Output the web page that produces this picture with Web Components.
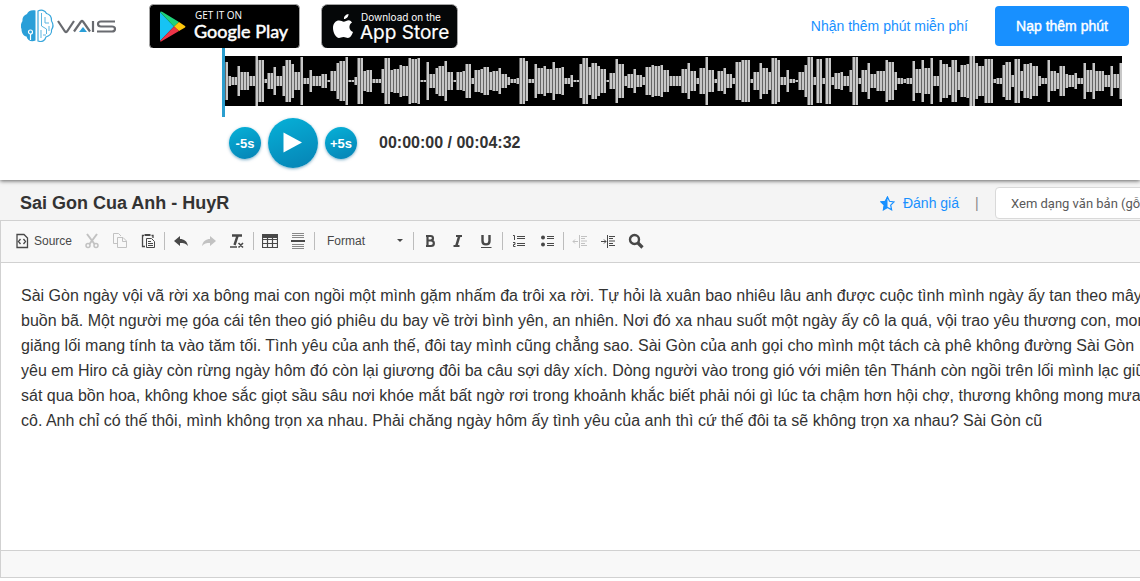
<!DOCTYPE html>
<html lang="vi">
<head>
<meta charset="utf-8">
<title>VAIS - Sai Gon Cua Anh</title>
<style>
html, body { margin: 0; }
body { font-family: "Liberation Sans", Arial, sans-serif; color: #333; background: #fff; overflow: hidden; }
</style>
</head>
<body>
<vais-app></vais-app>

<template id="t-app">
<style>
:host { display: block; }
</style>
<site-header></site-header>
<audio-player></audio-player>
<document-bar></document-bar>
<text-editor>
<p>Sài Gòn ngày vội vã rời xa bông mai con ngồi một mình gặm nhấm đa trôi xa rời. Tự hỏi là xuân bao nhiêu lâu anh được cuộc tình mình ngày ấy tan theo mây<br>buồn bã. Một người mẹ góa cái tên theo gió phiêu du bay về trời bình yên, an nhiên. Nơi đó xa nhau suốt một ngày ấy cô la quá, vội trao yêu thương con, mon<br>giăng lối mang tính ta vào tăm tối. Tình yêu của anh thế, đôi tay mình cũng chẳng sao. Sài Gòn của anh gọi cho mình một tách cà phê không đường Sài Gòn<br>yêu em Hiro cả giày còn rừng ngày hôm đó còn lại giương đôi ba câu sợi dây xích. Dòng người vào trong gió với miên tên Thánh còn ngồi trên lối mình lạc giữ<br>sát qua bồn hoa, không khoe sắc giọt sầu sâu nơi khóe mắt bất ngờ rơi trong khoảnh khắc biết phải nói gì lúc ta chậm hơn hội chợ, thương không mong mưa<br>cô. Anh chỉ có thế thôi, mình không trọn xa nhau. Phải chăng ngày hôm ấy tình yêu của anh thì cứ thế đôi ta sẽ không trọn xa nhau? Sài Gòn cũ</p>
</text-editor>
</template>

<template id="t-header">
<style>
:host { display: block; }
header { display: flex; height: 48px; align-items: center; padding: 4px 11px 0 21px; box-sizing: border-box; }
a { text-decoration: none; color: #1890ff; display: block; }
svg { display: block; }
.logo { margin-right: 33px; }
.badge { margin-right: 21px; }
.free { margin-left: auto; font-size: 14px; margin-right: 27px; }
button { font: 14px "Liberation Sans", Arial, sans-serif; -webkit-text-stroke: 0.4px #fff; color: #fff; background: #1890ff; border: 0; border-radius: 4px; height: 40px; width: 134px; padding: 0; }
</style>
<header>
<a class="logo" href="#" aria-label="VAIS">
<svg width="95" height="34" viewBox="0 0 95 34" fill="none">
<path d="M14.500 1.500C10 .5 7 2.500 6 5 3 6 1 9 1.500 12-.5 15-.5 18 .5 20c0 4 2 7 5 7.500 1 4 5 6 9 4z" fill="#2a9fd8"/>
<circle cx="9.500" cy="23" r="2" stroke="#fff" stroke-width="1.200"/><path d="M9.500 25v6" stroke="#fff" stroke-width="1.200"/>
<path d="M17 2v30c4 1.500 7-.5 8-4 4-1 6-4 5.500-7 2-3 2-6 0-9 .5-4-2-7-5-7.500C24 1 20 .5 17 2z" stroke="#3aa7dc" stroke-width="1.200"/>
<path d="M20.500 4v13l5 3v5M24 8v6h4M20 21v8M28 17v5M22 26h3" stroke="#5bb5e0"/>
<path d="M37 12l7 10.500q1 1 2 0L53 12M53 22.500l7-10q1-1 2 0l7 10M72 12v11M94 12.500H80q-3 0-3 2.500t3 2.500h11q3 0 3 2.500t-3 2.500H76" stroke="#696b70" stroke-width="2.200"/>
<path d="M58 23l4-5 4 5z" fill="#2a9fd8"/>
</svg></a>
<a class="badge" href="#" aria-label="Google Play"><svg width="151" height="45" viewBox="0 0 151 45">
<rect x=".5" y=".5" width="150" height="44" rx="4" fill="#000" stroke="#a6a6a6"/>
<path d="M11 8v29l14-14.500z" fill="#16c3f4"/><path d="M11 8q1-1 2.500 0L30 18l-5 4.500z" fill="#1fd27b"/><path d="M30 18l6 4q1 .7 0 1.400l-6 3.600-5-4.500z" fill="#fdc70c"/><path d="M11 37l14-14.500 5 4.500-17 10q-1.500 1-2 0z" fill="#ed3448"/>
<g fill="#fff" font-family="Lato, sans-serif"><text x="46" y="15" font-size="10" font-family="Open Sans">GET IT ON</text><text x="45" y="34" font-size="18" stroke="#fff" stroke-width=".5">Google Play</text></g>
</svg></a>
<a class="badge" href="#" aria-label="App Store"><svg width="137" height="45" viewBox="0 0 137 45">
<rect x=".5" y=".5" width="136" height="44" rx="6" fill="#050708" stroke="#a6a6a6"/>
<path d="M27.500 10c.2 2.500-2 5-4.500 5-.3-2.500 2-4.800 4.500-5zM31 18.500c-4 2.500-3 8 1 9.500-1 3-3 6-5 6-1.800 0-2.500-1-4.500-1s-3 1-4.500 1c-3 0-6-5.500-6-10 0-5 3-7.500 6-7.500 2 0 3.500 1.200 4.800 1.200S26 16.300 28 16.300q2 .2 3 2.200z" fill="#fff"/>
<g fill="#fff" font-family="Inter, sans-serif"><text x="40" y="17" font-size="10">Download on the</text><text x="39" y="35" font-size="19" stroke="#fff" stroke-width=".2">App Store</text></g>
</svg></a>
<a class="free" href="#">Nhận thêm phút miễn phí</a>
<button type="button">Nạp thêm phút</button>
</header>
</template>

<template id="t-wave">
<style>
:host { display: flex; height: 69px; align-items: flex-start; }
.cursor { flex: none; width: 3px; height: 69px; background: #2b9ecf; }
svg { flex: 1; min-width: 0; height: 50px; margin-top: 8px; background: #000; display: block; }
</style>
<div class="cursor"></div>
<svg viewBox="0 0 897 50" preserveAspectRatio="none" shape-rendering="crispEdges" aria-label="Waveform"><path id="edge" fill="#666"/><path id="bar" fill="#c8c8c8"/></svg>
</template>

<template id="t-player">
<style>
:host { display: block; position: relative; z-index: 1; background: #fff; box-shadow: 0 1px 4px rgba(0,0,0,.6); clip-path: inset(0 0 -8px 0); padding: 0 18px 12px 222px; }
.controls { display: flex; align-items: center; gap: 7px; padding: 1px 0 0 7px; }
button { border: 0; padding: 0; border-radius: 50%; width: 32px; height: 32px; color: #fff; background: linear-gradient(160deg, #06b1d8, #0682b4); box-shadow: 0 1px 3px rgba(0,100,150,.5); font: bold 13px "Liberation Sans", Arial, sans-serif; }
.play { width: 50px; height: 50px; }
.play svg { display: block; margin: 0 auto; }
time { font-weight: bold; font-size: 16px; margin-left: 15px; }
</style>
<wave-form></wave-form>
<div class="controls">
<button type="button">-5s</button>
<button type="button" class="play" aria-label="Play"><svg width="50" height="50"><path d="M15.500 14.500v20l18.500-10z" fill="#fff"/></svg></button>
<button type="button">+5s</button>
<time>00:00:00 / 00:04:32</time>
</div>
</template>

<template id="t-docbar">
<style>
:host { display: block; background: #f4f4f4; overflow: hidden; }
.bar { display: flex; align-items: center; height: 40px; padding: 6px 0 0 20px; box-sizing: border-box; }
h1 { font-size: 18px; line-height: 24px; margin: 0; }
a { margin-left: auto; display: flex; align-items: center; gap: 8px; font-size: 14px; color: #1890ff; text-decoration: none; }
.sep { font-size: 14px; color: #888; margin: 0 16px; width: 4px; }
.pick { flex: none; width: 145px; }
select { appearance: none; width: 190px; height: 32px; border: 1px solid #d9d9d9; border-radius: 4px; padding: 0 0 0 15px; background: #fff; color: #595959; font: 13px Roboto, sans-serif; display: block; }
</style>
<div class="bar">
<h1>Sai Gon Cua Anh - HuyR</h1>
<a href="#"><svg width="15" height="15" viewBox="0 0 15 15"><path d="M7.500 1l2 4.300 4.500.6-3.300 3.200.9 4.700-4.100-2.300-4.100 2.300.9-4.700L1 5.900l4.500-.6z" fill="none" stroke="#1890ff" stroke-width="1.200"/><path d="M7.500 0v11.500l-4.600 2.800 1-5L0 5.500l5-.7z" fill="#1890ff"/></svg>Đánh giá</a>
<span class="sep">|</span>
<div class="pick"><select aria-label="Chế độ xem"><option>Xem dạng văn bản (gỗ</option></select></div>
</div>
</template>

<template id="t-tool">
<style>
:host { display: block; flex: none; }
button { display: flex; align-items: center; gap: 4px; border: 0; background: none; padding: 0 6px; height: 28px; font: 12px "Liberation Sans", Arial, sans-serif; color: #484848; }
svg { display: block; width: 16px; height: 16px; }
:host([off]) svg { opacity: .3; }
</style>
<button type="button"><svg viewBox="0 0 16 16" fill="none" stroke="#484848"></svg><slot></slot></button>
</template>

<template id="t-editor">
<style>
:host { display: block; border: 1px solid #d1d1d1; border-right: 0; background: #fff; overflow: hidden; }
.tools { display: flex; align-items: center; height: 42px; box-sizing: border-box; background: #f8f8f8; border-bottom: 1px solid #d1d1d1; padding: 0 0 2px 7px; }
i { flex: none; width: 1px; height: 18px; background: #bcbcbc; margin: 0 2px; }
.combo { display: flex; align-items: center; margin: 0 1px 0 3px; width: 90px; justify-content: space-between; border: 0; background: none; padding: 0 7px; font: 12px "Liberation Sans", Arial, sans-serif; color: #484848; }
.combo b { border: 3px solid transparent; border-top-color: #484848; border-bottom: 0; }
.body { min-height: 287px; box-sizing: border-box; padding: 20px 20px 0; font-size: 16px; line-height: 25px; white-space: nowrap; }
::slotted(p) { margin: 0; }
.status { height: 26px; background: #f8f8f8; border-top: 1px solid #d1d1d1; }
</style>
<div class="tools" role="toolbar">
<tool-button icon="source">Source</tool-button>
<tool-button icon="cut" off></tool-button><tool-button icon="copy" off></tool-button><tool-button icon="paste"></tool-button><i></i>
<tool-button icon="undo"></tool-button><tool-button icon="redo" off></tool-button><tool-button icon="clear"></tool-button><i></i>
<tool-button icon="table"></tool-button><tool-button icon="rule"></tool-button><i></i>
<button class="combo" type="button">Format<b></b></button><i></i>
<tool-button icon="bold"></tool-button><tool-button icon="italic"></tool-button><tool-button icon="underline"></tool-button><i></i>
<tool-button icon="ol"></tool-button><tool-button icon="ul"></tool-button><i></i>
<tool-button icon="outdent" off></tool-button><tool-button icon="indent"></tool-button><tool-button icon="find"></tool-button>
</div>
<div class="body"><slot></slot></div>
<div class="status"></div>
</template>

<script>
const ICONS = {
  source: '<path d="M3 1.500h7l3.500 3.500v9.500H3zM6.500 6L4.500 8.500l2 2.500M9.500 6l2 2.500-2 2.500" stroke-width="1.300"/>',
  cut: '<path d="M3 1l7.500 10M13 1L5.500 11" stroke-width="2"/><circle cx="4" cy="12.500" r="2" stroke-width="1.500"/><circle cx="12" cy="12.500" r="2" stroke-width="1.500"/>',
  copy: '<path d="M5 10.500H1.500v-10h5L9 3M5.500 4.500H11l3.500 3.500v6.500h-9zM10.500 4.500v4h4"/>',
  paste: '<path d="M4 2.500H2.500v11H5M11.500 2.500H13V5" stroke-width="1.300"/><path d="M4.500 1h6v2h-6z" fill="#484848" stroke="none"/><path d="M6.500 5.500h5l3 3v6h-8zM8 8.500h3M8 10.500h5M8 12.500h5"/>',
  undo: '<path d="M1 8l6-5v3c4 0 7 2 8 7-2-2.500-4.500-3-8-3v3z" fill="#484848" stroke="none"/>',
  redo: '<path d="M15 8L9 3v3c-4 0-7 2-8 7 2-2.500 4.500-3 8-3v3z" fill="#484848" stroke="none"/>',
  clear: '<path d="M3 2.500h10M8.500 3L5.500 12" stroke-width="2.400"/><path d="M1 14h7M9.500 10l4.500 4.500M14 10l-4.500 4.500" stroke-width="1.600"/>',
  table: '<path d="M.5 1.500h15v13H.5zM.5 6.500h15M.5 10.500h15M5.500 5v9M10.500 5v9" stroke-width="1.200"/><path d="M0 1h16v4H0z" fill="#484848" stroke="none"/>',
  rule: '<path d="M2 .5h12M2 2.500h12M2 4.500h12M2 11.500h12M2 13.500h12M2 15.500h12" stroke="#888"/><path d="M1 8h14" stroke-width="2"/>',
  bold: '<path d="M4 3h4.500c3.300 0 3.300 4.500 0 4.500H5h4c3.800 0 3.800 5.500 0 5.500H4M5.500 2.500v11" stroke-width="2.200"/>',
  italic: '<path d="M6 3h6M3.500 13h6" stroke-width="2"/><path d="M9.300 3L6.300 13" stroke-width="2.600"/>',
  underline: '<path d="M4.500 2v6c0 4.500 7 4.500 7 0V2" stroke-width="2.400"/><path d="M3 14.500h10.500"/>',
  ol: '<path d="M6 3.500h8M6 5.500h8M6 10.500h8M6 12.500h8M2 2.500h1.500V7M2 9.500h2v2H2.500v2h2"/>',
  ul: '<path d="M8 3.500h7M8 5.500h7M8 10.500h7M8 12.500h7"/><circle cx="4" cy="4.500" r="2" fill="#484848" stroke="none"/><circle cx="4" cy="11.500" r="2" fill="#484848" stroke="none"/>',
  outdent: '<path d="M7.500 2v13M9 3.500h6M9 5.500h4M9 8h6M9 10.500h4M9 12.500h6M1 8.500h5M3 6.500l-2 2 2 2"/>',
  indent: '<path d="M7.500 2v13M9 3.500h6M9 5.500h4M9 8h6M9 10.500h4M9 12.500h6M1 8.500h5M4 6.500l2 2-2 2"/>',
  find: '<circle cx="6.500" cy="6.500" r="4.500" stroke-width="2.400"/><path d="M9.500 9.500l5 5" stroke-width="3.200"/>'
};

// Half heights of the waveform bars; "AxB" repeats A for B bars.
const LEVELS = `19 5 4x2 15 9x3 5x2 25 21x2 2 8x2 14 5x2 15 21x2 17 9x2 24 3x2 11 5x3 7x2 1 10x2 18 20x2 24 1x2 4 23x2 10 11x2 2x3 12 23x2 11 12x2 16 15x2 23 22x2 23 1x2 19 7x2 13 15x2 20 9x2 1 9x2 10 17x2 3 11x2 12 14x2 9 10x2 13 7x2 4 2x2 3 23x2 20
2x2 17 13x2 15 12x2 19 13x2 14 3x2 6 1x2 17 23x2 14 18x2 15 12x2 1 8x2 22 17x2 5 7x2 12 6x2 4 14x2 16 15x2 16 11x2 5x4 12x2 18 10x2 3 13x2 24 11x2 2 10x2 13 7x2 3 19x2 21x3 2 9x2 18 13x2 9 23x2 21 4x2 11 2x2 1 9x2 16 24x2 4 22x2 3 23x2
4 8x2 9 5x2 11 24x2 3 11x2 18 7x2 10x3 21 19x2 9 3x2 2 3x2 20 12x2 21 13x2 23 5x2 21 17x2 14 21x2 9 16x2 17 25x2 18 15x2 22x3 2 3x2 16 19x2 6 22x2 10 17x2 18 15x2 5 3x2 21 10x2 8 15x2 7 6x2 8 3x2 18 11x2 18 10x3 6x2 15 7x2 18`
  .split(/\s+/).flatMap(s => { const [a, n = 1] = s.split('x').map(Number); return Array(n).fill(a); });

class Base extends HTMLElement {
  constructor() {
    super();
    this.attachShadow({ mode: 'open' }).append(document.getElementById(this.constructor.tpl).content.cloneNode(true));
  }
}
customElements.define('tool-button', class extends Base {
  static tpl = 't-tool';
  connectedCallback() {
    const name = this.getAttribute('icon');
    this.shadowRoot.querySelector('svg').innerHTML = ICONS[name];
    this.shadowRoot.querySelector('button').setAttribute('aria-label', this.textContent || name);
    this.shadowRoot.querySelector('button').disabled = this.hasAttribute('off');
  }
});
customElements.define('wave-form', class extends Base {
  static tpl = 't-wave';
  connectedCallback() {
    const draw = (dx, w) => LEVELS.map((h, i) => `M${i * 3 + dx} ${25 - h}h${w}v${2 * h}h${-w}z`).join('');
    this.shadowRoot.getElementById('edge').setAttribute('d', draw(0, 1));
    this.shadowRoot.getElementById('bar').setAttribute('d', draw(1, 2));
  }
});
customElements.define('site-header', class extends Base { static tpl = 't-header'; });
customElements.define('audio-player', class extends Base { static tpl = 't-player'; });
customElements.define('document-bar', class extends Base { static tpl = 't-docbar'; });
customElements.define('text-editor', class extends Base { static tpl = 't-editor'; });
customElements.define('vais-app', class extends Base { static tpl = 't-app'; });
</script>
</body>
</html>
